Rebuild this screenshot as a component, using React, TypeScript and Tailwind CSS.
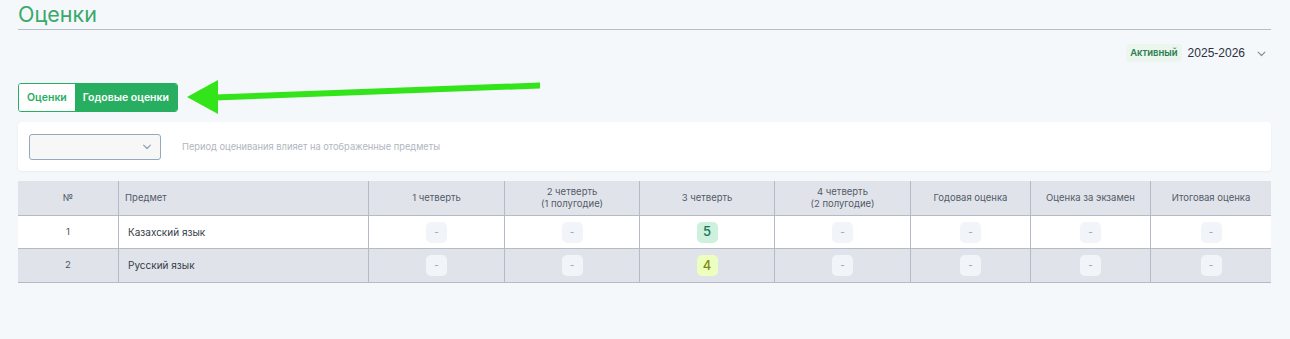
import React from "react";

const cols = [
  "w-[100px]",
  "w-[250px]",
  "w-[136px]",
  "w-[135px]",
  "w-[135px]",
  "w-[136px]",
  "w-[120px]",
  "w-[120px]",
  "w-[121px]",
];

const headers: React.ReactNode[] = [
  "№",
  "Предмет",
  "1 четверть",
  <>2 четверть<br />(1 полугодие)</>,
  "3 четверть",
  <>4 четверть<br />(2 полугодие)</>,
  "Годовая оценка",
  "Оценка за экзамен",
  "Итоговая оценка",
];

type Grade = { v: string; kind: "none" | "five" | "four" };

const rows: { n: string; name: string; grades: Grade[]; bg: string }[] = [
  {
    n: "1",
    name: "Казахский язык",
    bg: "bg-white",
    grades: [
      { v: "-", kind: "none" },
      { v: "-", kind: "none" },
      { v: "5", kind: "five" },
      { v: "-", kind: "none" },
      { v: "-", kind: "none" },
      { v: "-", kind: "none" },
      { v: "-", kind: "none" },
    ],
  },
  {
    n: "2",
    name: "Русский язык",
    bg: "bg-[#e0e4ea]",
    grades: [
      { v: "-", kind: "none" },
      { v: "-", kind: "none" },
      { v: "4", kind: "four" },
      { v: "-", kind: "none" },
      { v: "-", kind: "none" },
      { v: "-", kind: "none" },
      { v: "-", kind: "none" },
    ],
  },
];

function Chip({ g }: { g: Grade }) {
  if (g.kind === "five")
    return (
      <span className="flex h-[21px] w-[21px] items-center justify-center rounded-[5px] bg-[#cdf1dd] text-[13px] font-medium text-[#18745a]">
        {g.v}
      </span>
    );
  if (g.kind === "four")
    return (
      <span className="flex h-[21px] w-[21px] items-center justify-center rounded-[5px] bg-[#ecffbf] text-[13px] font-medium text-[#7c8a14]">
        {g.v}
      </span>
    );
  return (
    <span className="flex h-[21px] w-[21px] items-center justify-center rounded-[5px] bg-[#f1f5fa] text-[10px] text-[#9aa0ab]">
      {g.v}
    </span>
  );
}

function Chevron({ className }: { className?: string }) {
  return (
    <svg viewBox="0 0 12 8" className={className} fill="none" stroke="currentColor" strokeWidth="1.6" strokeLinecap="round" strokeLinejoin="round">
      <path d="M1.5 1.5 6 6l4.5-4.5" />
    </svg>
  );
}

export default function App() {
  return (
    <div
      className="relative min-h-[339px] w-[1290px] bg-[#f5f8fb] px-[18px] text-[#4a5060]"
      style={{ fontFamily: "Inter, 'Noto Sans', sans-serif" }}
    >
      <div className="pr-[1px]">
        <h1 className="h-[30px] border-b border-[#b8bcc6] pt-[1px] text-[21.5px] leading-[26px] text-[#3aa96a]">
          Оценки
        </h1>
        <div className="flex justify-end pt-[14px] pr-[5px]">
          <div className="flex items-center">
            <span className="rounded-[3px] bg-[#eaf6ee] px-[4px] py-[3px] text-[9.5px] font-semibold leading-[12px] text-[#2d7e4f]">
              Активный
            </span>
            <span
              className="ml-[6px] text-[12px] text-[#2b3140]"
              style={{ fontFamily: "'Liberation Sans', Arial, sans-serif" }}
            >
              2025-2026
            </span>
            <Chevron className="ml-[12px] mt-[1px] h-[6px] w-[9px] text-[#8a8f9c]" />
          </div>
        </div>

        <div className="mt-[21px] flex">
          <div className="flex h-[29px] overflow-hidden rounded-[3px] border border-[#27ae60] text-[10.5px] font-semibold">
            <span className="flex items-center bg-white px-[8px] text-[#27ae60]">Оценки</span>
            <span className="flex items-center bg-[#27ae60] px-[8px] text-white">Годовые оценки</span>
          </div>
        </div>

        <div className="mt-[10px] flex h-[49px] items-center rounded-[4px] bg-white px-[11px] shadow-[0_1px_3px_rgba(0,0,0,0.05)]">
          <div className="flex h-[26px] w-[132px] items-center justify-end rounded-[3px] border border-[#93a9bf] bg-[#f7f7f7] pr-[8px]">
            <Chevron className="h-[6px] w-[10px] text-[#8ca0b4]" />
          </div>
          <span className="ml-[21px] text-[9.3px] text-[#b1b6c0]">
            Период оценивания влияет на отображенные предметы
          </span>
        </div>

        <div className="mt-[10px] w-[1253px] border-b border-[#b5bac6] text-[9.5px]">
          <div className="flex h-[35px] border-b border-[#b5bac6] bg-[#e0e4ea]">
            {headers.map((h, i) => (
              <div
                key={i}
                className={`${cols[i]} flex items-center ${i === 1 ? "justify-start pl-[6px]" : "justify-center text-center"} ${i > 0 ? "border-l border-[#b5bac6]" : ""} leading-[12px] text-[#535a68]`}
              >
                {h}
              </div>
            ))}
          </div>
          {rows.map((r, ri) => (
            <div key={ri} className={`flex h-[33px] ${ri === 0 ? "border-b border-[#b5bac6]" : ""} ${r.bg}`}>
              <div className={`${cols[0]} flex items-center justify-center`}>{r.n}</div>
              <div className={`${cols[1]} flex items-center border-l border-[#b5bac6] pl-[9px] text-[10px] text-[#353b48]`}>
                {r.name}
              </div>
              {r.grades.map((g, gi) => (
                <div key={gi} className={`${cols[gi + 2]} flex items-center justify-center border-l border-[#b5bac6]`}>
                  <Chip g={g} />
                </div>
              ))}
            </div>
          ))}
        </div>
      </div>

      <svg className="pointer-events-none absolute left-[185px] top-[78px]" width="360" height="38" viewBox="0 0 360 38">
        <polygon points="2,19 33,2 33,36" fill="#33e41a" />
        <polygon points="30,16.5 355,4.5 355,10.5 30,22.5" fill="#33e41a" />
      </svg>
    </div>
  );
}
